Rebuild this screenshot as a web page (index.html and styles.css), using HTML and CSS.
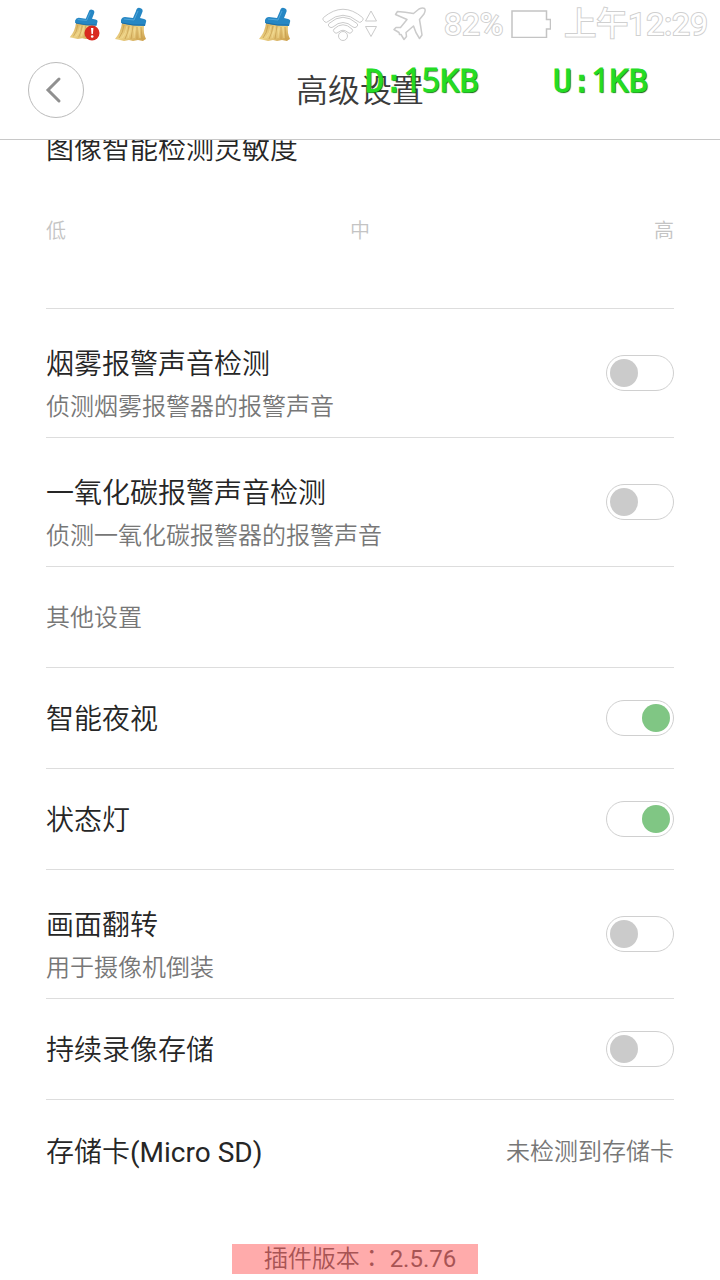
FILE: index.html
```html
<!DOCTYPE html>
<html lang="zh-CN">
<head>
    <meta charset="UTF-8">
    <meta name="viewport" content="width=device-width, initial-scale=1.0">
    <title>高级设置</title>
    <link rel="stylesheet" href="styles.css">
</head>
<body>
    <!-- shared icon shapes -->
    <svg class="defs" aria-hidden="true">
        <defs>
            <linearGradient id="straw" x1="0" y1="0" x2="1" y2="1">
                <stop offset="0" stop-color="#cfa552"/>
                <stop offset="0.5" stop-color="#ecd184"/>
                <stop offset="1" stop-color="#c99a45"/>
            </linearGradient>
            <symbol id="broom" viewBox="0 0 34 36">
                <path d="M8 17 L30 20 Q29 27 32 33 Q30 34 29 35 L24 34 L19 35 L15 34 L10 35 L6 34 L1 33 Q7 26 8 17Z" fill="url(#straw)"/>
                <path d="M10 19 Q9 27 5 32 M15 20 Q14 27 11 33 M19 20 L17 33 M23 21 L23 33 M27 21 L28 33" stroke="#c39a4a" stroke-width=".7" fill="none"/>
                <path d="M13 20 Q12 27 8 32 M17 20 L14 32 M21 21 L20 32 M25 21 L26 32" stroke="#f3dd96" stroke-width=".7" fill="none"/>
                <path d="M7 14 Q8 11 11 11 L19 12 L22 5 Q23 1 26 2 Q30 3 28 7 L26 12 L30 13 Q33 14 32 16 L31 20 Q18 20 7 17Z" fill="#2687c4"/>
                <path d="M10 13 L20 14 L24 5" stroke="#4fa6da" fill="none"/>
                <path d="M8 17 Q19 20 31 19" stroke="#1d6ca3" fill="none"/>
            </symbol>
        </defs>
    </svg>

    <div class="status-bar">
        <div class="notices">
            <span class="notice">
                <svg class="broom small"><use href="#broom"/></svg>
                <svg class="alert" viewBox="0 0 16 16"><circle cx="8" cy="8" r="7.5" fill="#d92a20"/><path d="M7 3h2.4l-.5 6H7.5z" fill="#fff"/><circle cx="8.2" cy="11.5" r="1.3" fill="#fff"/></svg>
            </span>
            <svg class="broom"><use href="#broom"/></svg>
            <svg class="broom apart"><use href="#broom"/></svg>
        </div>
        <div class="system">
            <svg class="wifi" viewBox="0 0 56 36">
                <g fill="#fff" stroke="#cbcbcb">
                    <path d="M1.500 11.500 Q21 -5 40.500 11.500 Q42 13 40.500 14.500 L39 16 Q37.500 17 36 15.500 Q21 3 6 15.500 Q4.500 17 3 16 L1.500 14.500 Q0 13 1.500 11.500Z"/>
                    <path d="M7 17.500 Q21 5 35 17.500 Q36.500 19 35 20.500 Q33 22.500 31 21 Q21 12 11 21 Q9 22.500 7 20.500 Q5.500 19 7 17.500Z"/>
                    <path d="M12 23 Q21 14.500 30 23 Q31.500 24.500 29.500 26.500 Q28 28 26 26.500 Q21 22 16 26.500 Q14 28 12.500 26.500 Q10.500 24.500 12 23Z"/>
                    <circle cx="21" cy="30" r="4.500"/>
                    <path d="M49 5 L54.500 15 H43.500Z M43.500 20.500 H54.500 L49 30.500Z"/>
                </g>
            </svg>
            <svg class="plane" viewBox="0 0 34 34">
                <path d="M31.500 1.500 Q33 3 31 7 L26.500 12.500 Q28 21 29 28 L26.500 31.500 Q22.500 26 20.500 19 L13 25.500 L13.500 29.500 L11 32.500 L8 27.500 L6.500 27.500 L6 25.500 L1 22.500 L3 20.500 L7.500 20.500 L14 12.500 L2.500 7.500 L4.500 4.500 Q12 5 20.500 6.500 L26 2 Q29.500 .5 31.500 1.500Z" fill="#fff" stroke="#cbcbcb" stroke-width="1.500" stroke-linejoin="round"/>
            </svg>
            <span class="outlined battery-level">82%</span>
            <svg class="battery" viewBox="0 0 40 28"><path d="M1 1H35.500V9.500H39.500V19H35.500V27.500H1Z" fill="#fff" stroke="#c4c4c4" stroke-width="1.500"/></svg>
            <span class="outlined clock">上午12:29</span>
        </div>
    </div>

    <header class="header">
        <button type="button" class="back" aria-label="返回">
            <svg viewBox="0 0 24 32"><path d="M17 5 L6 16 L17 27" fill="none" stroke="#909090" stroke-width="3" stroke-linecap="round"/></svg>
        </button>
        <h1>高级设置</h1>
    </header>

    <!-- network speed overlay -->
    <div class="speed">
        <span>D:<span class="num">15</span>KB</span>
        <span>U:<span class="num">1</span>KB</span>
    </div>

    <main class="settings">
        <section class="sensitivity">
            <h2 class="name">图像智能检测灵敏度</h2>
            <div class="levels">
                <span>低</span>
                <span>中</span>
                <span>高</span>
            </div>
        </section>

        <label class="row">
            <span class="text">
                <span class="name">烟雾报警声音检测</span>
                <span class="desc">侦测烟雾报警器的报警声音</span>
            </span>
            <input type="checkbox" class="switch">
        </label>
        <label class="row">
            <span class="text">
                <span class="name">一氧化碳报警声音检测</span>
                <span class="desc">侦测一氧化碳报警器的报警声音</span>
            </span>
            <input type="checkbox" class="switch">
        </label>

        <h2 class="row group-title">其他设置</h2>

        <label class="row">
            <span class="name">智能夜视</span>
            <input type="checkbox" class="switch" checked>
        </label>
        <label class="row">
            <span class="name">状态灯</span>
            <input type="checkbox" class="switch" checked>
        </label>
        <label class="row">
            <span class="text">
                <span class="name">画面翻转</span>
                <span class="desc">用于摄像机倒装</span>
            </span>
            <input type="checkbox" class="switch">
        </label>
        <label class="row">
            <span class="name">持续录像存储</span>
            <input type="checkbox" class="switch">
        </label>
        <div class="row last">
            <span class="name">存储卡<span class="latin">(Micro SD)</span></span>
            <span class="desc">未检测到存储卡</span>
        </div>
    </main>

    <footer>
        <p class="version" lang="zh-TW">插件版本： <span class="latin">2.5.76</span></p>
    </footer>
</body>
</html>
```

FILE: styles.css
```css
* {
    margin: 0;
    padding: 0;
    box-sizing: border-box;
}

body {
    position: relative;
    min-height: 100vh;
    background: #fff;
    color: #262626;
    font-family: Roboto, "Noto Sans CJK SC", sans-serif;
    font-size: 28px;
    font-weight: 350;
}

svg {
    display: block;
    flex-shrink: 0;
}

.defs {
    position: absolute;
    width: 0;
    height: 0;
}

.latin {
    font-weight: 400;
}

/* Status bar */
.status-bar {
    position: relative;
    z-index: 2;
    display: flex;
    justify-content: space-between;
    align-items: center;
    height: 40px;
    padding: 8px 12px 0 68px;
}

.notices,
.system {
    display: flex;
    align-items: center;
}

.notice {
    position: relative;
    margin-right: 14px;
}

.broom {
    width: 34px;
    height: 36px;
}

.broom.small {
    width: 32px;
    height: 32px;
}

.broom.apart {
    margin-left: 110px;
}

.alert {
    position: absolute;
    right: 0;
    bottom: -1px;
    width: 16px;
    height: 16px;
}

.wifi {
    width: 56px;
    height: 36px;
    margin-right: 15px;
}

.plane {
    width: 34px;
    height: 34px;
    margin-right: 17px;
}

.battery {
    width: 40px;
    height: 28px;
    margin: 0 13px 0 8px;
}

.outlined {
    color: #fff;
    font-size: 32px;
    font-weight: 400;
    line-height: 32px;
    -webkit-text-stroke: 2px #d0d0d0;
    paint-order: stroke fill;
}

/* Header */
.header {
    position: relative;
    z-index: 1;
    display: grid;
    grid-template-columns: 1fr auto 1fr;
    align-items: center;
    height: 100px;
    padding: 0 28px;
    background: #fff;
    border-bottom: 1px solid #c8c8c8;
}

.header h1 {
    padding-top: 2px;
    color: #3c3c3c;
    font-size: 32px;
    font-weight: 350;
    line-height: 40px;
}

.back {
    display: flex;
    align-items: center;
    justify-content: center;
    width: 56px;
    height: 56px;
    background: #fff;
    border: 1px solid #bbb;
    border-radius: 50%;
    cursor: pointer;
}

.back svg {
    width: 24px;
    height: 32px;
    margin-right: 4px;
}

.speed {
    position: absolute;
    z-index: 2;
    top: 60px;
    left: 365px;
    display: flex;
    gap: 74px;
    color: #24dc24;
    font-family: "DejaVu Sans Mono", monospace;
    font-size: 32px;
    font-weight: 400;
    line-height: 40px;
    -webkit-text-stroke: 1px #24dc24;
    text-shadow: 1px 1px 1px #0a5a0a;
}

.speed .num {
    font-family: "Open Sans", sans-serif;
}

/* Settings list */
.settings {
    padding: 0 46px;
}

.sensitivity {
    margin-top: -14px;
    padding-bottom: 62px;
    border-bottom: 1px solid #ddd;
}

.levels {
    display: flex;
    justify-content: space-between;
    margin-top: 46px;
    color: #c4c4c4;
    font-size: 20px;
    line-height: 30px;
}

.row {
    display: flex;
    align-items: center;
    justify-content: space-between;
    min-height: 101px;
    border-bottom: 1px solid #ddd;
}

.row.last {
    border-bottom: none;
}

.text {
    display: flex;
    flex-direction: column;
    gap: 3px;
    padding: 32px 0 13px;
}

.name {
    padding-top: 4px;
    font-size: 28px;
    font-weight: 350;
    line-height: 40px;
}

.desc,
.group-title {
    padding-top: 2px;
    color: #777;
    font-size: 24px;
    font-weight: 350;
    line-height: 34px;
}

.switch {
    appearance: none;
    display: flex;
    align-items: center;
    flex-shrink: 0;
    width: 68px;
    height: 36px;
    padding: 0 3px;
    border: 1px solid #d0d0d0;
    border-radius: 18px;
    cursor: pointer;
}

.switch::before {
    content: "";
    width: 28px;
    height: 28px;
    border-radius: 50%;
    background: #cbcbcb;
}

.switch:checked {
    justify-content: flex-end;
}

.switch:checked::before {
    background: #80c684;
}

/* Plugin version */
footer {
    display: flex;
    justify-content: center;
    padding-top: 43px;
}

.version {
    margin-right: 10px;
    padding: 0 22px 0 32px;
    background: #ffabab;
    color: #a85454;
    font-family: Roboto, "Noto Sans CJK TC", sans-serif;
    font-size: 24px;
    line-height: 30px;
}
```
